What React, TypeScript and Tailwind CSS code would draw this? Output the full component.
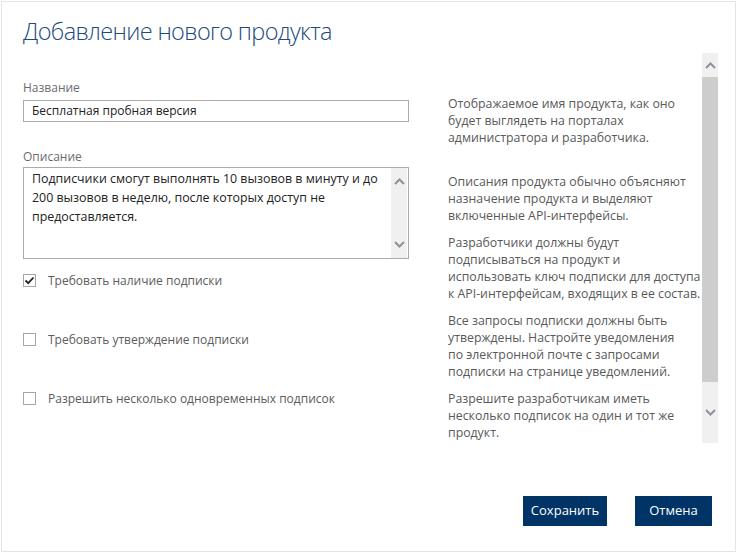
const ChevronUp = ({ className = "" }: { className?: string }) => (
  <svg width="11" height="7" viewBox="0 0 11 7" className={className}>
    <path d="M1 6L5.5 1.5L10 6" fill="none" stroke="currentColor" strokeWidth="2" />
  </svg>
)

const ChevronDown = ({ className = "" }: { className?: string }) => (
  <svg width="11" height="7" viewBox="0 0 11 7" className={className}>
    <path d="M1 1L5.5 5.5L10 1" fill="none" stroke="currentColor" strokeWidth="2" />
  </svg>
)

const Checkbox = ({ checked, label }: { checked?: boolean; label: string }) => (
  <div className="flex items-center h-[17px]">
    <div className="w-[13px] h-[13px] border border-[#a6a6a6] bg-white flex items-center justify-center">
      {checked && (
        <svg width="11" height="11" viewBox="0 0 11 11">
          <path d="M1.5 5.5L4.2 8.2L9.5 2.5" fill="none" stroke="#222" strokeWidth="1.8" />
        </svg>
      )}
    </div>
    <span className="ml-[12px] text-[12px] leading-[17px] text-[#5c5c5c] whitespace-nowrap">{label}</span>
  </div>
)

export default function App() {
  return (
    <div className="w-[737px] h-[553px] bg-white p-px font-['Open_Sans',sans-serif]">
      <div className="h-full border border-[#e4e4e4] flex flex-col">
        {/* Title */}
        <h1 className="pl-[21px] pt-[12px] text-[23.5px] tracking-[-0.65px] font-light leading-[34px] text-[#1e4a7e] whitespace-nowrap">
          Добавление нового продукта
        </h1>

        {/* Form area */}
        <div className="mt-[5px] h-[390px] flex pl-[21px] pr-[17px]">
          {/* Left fields */}
          <div className="w-[386px] shrink-0 flex flex-col">
            <label className="mt-[26px] text-[12px] leading-[17px] text-[#6b6b6b]">Название</label>
            <div className="mt-[4px] h-[22px] border border-[#ababab] px-[8px] flex items-center text-[12px] text-[#222]">
              Бесплатная пробная версия
            </div>

            <label className="mt-[26px] text-[12px] leading-[17px] text-[#6b6b6b]">Описание</label>
            <div className="mt-[2px] h-[92px] border border-[#ababab] flex">
              <div className="flex-1 min-w-0 pl-[8px] pt-[1px] text-[12.4px] leading-[19px] text-[#222] whitespace-nowrap">
                Подписчики смогут выполнять 10 вызовов в минуту и до
                <br />
                200 вызовов в неделю, после которых доступ не
                <br />
                предоставляется.
              </div>
              <div className="w-[16px] shrink-0 mr-px bg-[#f0f0f0] flex flex-col items-center justify-between py-[10px] text-[#8d929c]">
                <ChevronUp />
                <ChevronDown />
              </div>
            </div>

            <div className="mt-[13px]">
              <Checkbox checked label="Требовать наличие подписки" />
            </div>
            <div className="mt-[42px]">
              <Checkbox label="Требовать утверждение подписки" />
            </div>
            <div className="mt-[42px]">
              <Checkbox label="Разрешить несколько одновременных подписок" />
            </div>
          </div>

          {/* Help texts */}
          <div className="ml-[39px] flex-1 min-w-0 text-[12.3px] leading-[17px] text-[#595959] whitespace-nowrap">
            <p className="mt-[42px]">
              Отображаемое имя продукта, как оно
              <br />
              будет выглядеть на порталах
              <br />
              администратора и разработчика.
            </p>
            <p className="mt-[27px]">
              Описания продукта обычно объясняют
              <br />
              назначение продукта и выделяют
              <br />
              включенные API-интерфейсы.
            </p>
            <p className="mt-[10px]">
              Разработчики должны будут
              <br />
              подписываться на продукт и
              <br />
              использовать ключ подписки для доступа
              <br />
              к API-интерфейсам, входящих в ее состав.
            </p>
            <p className="mt-[10px]">
              Все запросы подписки должны быть
              <br />
              утверждены. Настройте уведомления
              <br />
              по электронной почте с запросами
              <br />
              подписки на странице уведомлений.
            </p>
            <p className="mt-[10px]">
              Разрешите разработчикам иметь
              <br />
              несколько подписок на один и тот же
              <br />
              продукт.
            </p>
          </div>

          {/* Scrollbar */}
          <div className="w-[16px] shrink-0 bg-[#f0f0f0] flex flex-col items-center text-[#8d929c]">
            <div className="h-[24px] flex items-center justify-center">
              <ChevronUp />
            </div>
            <div className="w-full h-[305px] bg-[#cdcdcd]" />
            <div className="flex-1 flex items-center justify-center">
              <ChevronDown />
            </div>
          </div>
        </div>

        {/* Buttons */}
        <div className="mt-[53px] flex justify-end gap-[28px] pr-[23px]">
          <button className="w-[84px] h-[30px] bg-[#003466] text-white text-[13px]">Сохранить</button>
          <button className="w-[77px] h-[30px] bg-[#003466] text-white text-[13px]">Отмена</button>
        </div>
      </div>
    </div>
  )
}
